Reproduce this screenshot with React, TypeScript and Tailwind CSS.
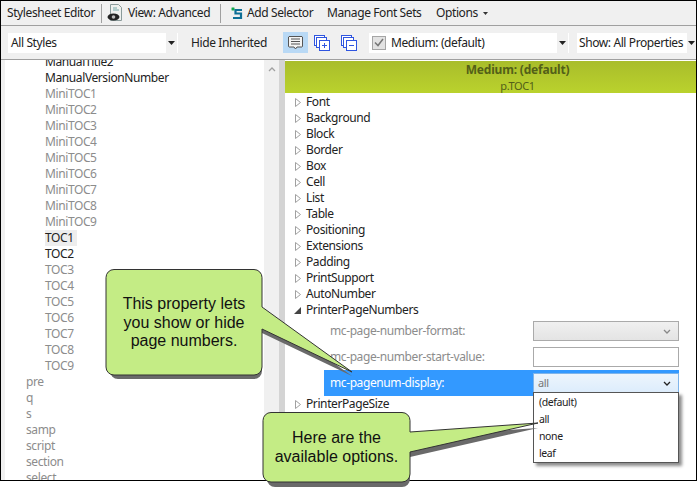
import React from "react";

const ui = "font-['Noto_Sans','Open_Sans',sans-serif]";

const before = ["ManualVersionNumber"];
const mini = ["MiniTOC1", "MiniTOC2", "MiniTOC3", "MiniTOC4", "MiniTOC5", "MiniTOC6", "MiniTOC7", "MiniTOC8", "MiniTOC9"];
const toc = ["TOC3", "TOC4", "TOC5", "TOC6", "TOC7", "TOC8", "TOC9"];
const tags = ["pre", "q", "s", "samp", "script", "section", "select"];
const groups = ["Font", "Background", "Block", "Border", "Box", "Cell", "List", "Table", "Positioning", "Extensions", "Padding", "PrintSupport", "AutoNumber"];

const Arrow = () => (
  <svg width="7" height="4" viewBox="0 0 7 4">
    <path d="M0 0h7L3.5 4z" fill="#222" />
  </svg>
);

const Open = () => (
  <svg width="6" height="9" viewBox="0 0 6 9" className="mr-[5px] shrink-0">
    <path d="M.5.5l5 4-5 4z" fill="#fff" stroke="#a0a0a0" />
  </svg>
);

const Chevron = ({ color = "#555" }: { color?: string }) => (
  <svg width="8" height="5" viewBox="0 0 8 5">
    <path d="M1 1l3 3 3-3" fill="none" stroke={color} strokeWidth="1.3" />
  </svg>
);

const Pages = ({ sign }: { sign: string }) => (
  <svg width="16" height="16" viewBox="0 0 16 16" fill="#fff" stroke="#2f55e0">
    <rect x="0.5" y="0.5" width="10" height="10" />
    <rect x="2.5" y="2.5" width="10" height="10" />
    <rect x="5.5" y="5.5" width="10" height="10" />
    <path d={sign === "+" ? "M8 10.500h5M10.500 8v5" : "M8 10.500h5"} />
  </svg>
);

const Style = ({ name, className = "text-[#8c8c8c]" }: { name: string; className?: string }) => (
  <div className={`h-4 leading-4 whitespace-nowrap ${className}`}>{name}</div>
);

const Group = ({ name }: { name: string }) => (
  <div className="flex h-4 items-center pl-[10px] text-[#222]">
    <Open />
    {name}
  </div>
);

export default function App() {
  return (
    <div className={`relative h-[497px] w-[697px] overflow-hidden bg-white text-[12px] tracking-[-0.4px] ${ui}`}>
      <div className="flex h-[481px] flex-col overflow-hidden border border-black bg-[#f0f0f0]">
        <div className="flex h-[25px] shrink-0 items-center border-b border-[#a0a0a0] whitespace-nowrap text-[#222]">
          <span className="ml-[6px] w-[88px]">Stylesheet Editor</span>
          <div className="ml-[6px] h-[19px] w-px bg-[#a0a0a0]" />
          <svg width="16" height="18" viewBox="0 0 16 18" className="ml-[5px]">
            <path d="M3.500.5h8l3 3v13h-11z" fill="#eef0ee" stroke="#8a9a9a" />
            <path d="M6 4h4M6 6h6" stroke="#7aa" />
            <ellipse cx="6.500" cy="13" rx="6" ry="3.500" fill="#222" />
            <circle cx="6.500" cy="13" r="1.800" fill="#bbb" />
          </svg>
          <span className="ml-[5px] w-[84px]">View: Advanced</span>
          <div className="ml-[8px] h-[19px] w-px bg-[#a0a0a0]" />
          <svg width="14" height="14" viewBox="0 0 14 14" className="ml-[8px]">
            <path d="M2.500 3h3M4 1.500v3" stroke="#12a84a" strokeWidth="2.500" />
            <path d="M13 4H6.500v3.500H12V12H4" fill="none" stroke="#0e6f96" strokeWidth="2.200" />
          </svg>
          <span className="ml-[4px] w-[68px]">Add Selector</span>
          <span className="ml-[12px] w-[96px]">Manage Font Sets</span>
          <span className="ml-[13px] w-[42px]">Options</span>
          <span className="ml-[5px] flex">
            <svg width="5" height="3" viewBox="0 0 5 3">
              <path d="M0 0h5L2.500 3z" fill="#333" />
            </svg>
          </span>
        </div>
        <div className="flex h-[34px] shrink-0 items-center border-b border-[#a0a0a0] whitespace-nowrap text-[#222]">
          <div className="ml-[7px] flex h-[20px] w-[170px] items-stretch bg-white">
            <span className="flex-1 pl-[3px] leading-[20px]">All Styles</span>
            <span className="mr-px flex w-[11px] items-center justify-center bg-[#f0f0f0]">
              <Arrow />
            </span>
          </div>
          <span className="ml-[13px] w-[76px]">Hide Inherited</span>
          <div className="ml-[16px] flex h-[21px] w-[25px] items-center justify-center bg-[#b9d9f5]">
            <svg width="15" height="14" viewBox="0 0 15 14">
              <path d="M1 .5h13l.5.5v9.500l-.500.500H9l-1.500 2L6 11H1l-.5-.500V1z" fill="#f4f4f4" stroke="#555" />
              <path d="M3 3h9M3 5.500h9M3 8h9" stroke="#555" />
            </svg>
          </div>
          <div className="ml-[6px] flex">
            <Pages sign="+" />
          </div>
          <div className="ml-[11px] flex">
            <Pages sign="-" />
          </div>
          <div className="ml-[12px] flex h-[20px] w-[200px] items-stretch bg-white">
            <span className="ml-[3px] flex w-[14px] items-center justify-center self-center">
              <span className="flex h-[14px] w-[14px] items-center justify-center border border-[#a5a5a5] bg-[#e2e2e2]">
                <svg width="10" height="9" viewBox="0 0 10 9">
                  <path d="M1 4.500l3 3L9 1" fill="none" stroke="#777" strokeWidth="1.500" />
                </svg>
              </span>
            </span>
            <span className="ml-[5px] flex-1 leading-[20px]">Medium: (default)</span>
            <span className="mr-px flex w-[11px] items-center justify-center bg-[#f0f0f0]">
              <Arrow />
            </span>
          </div>
          <div className="ml-[8px] flex h-[20px] flex-1 items-stretch bg-white">
            <span className="flex-1 pl-[2px] leading-[20px]">Show: All Properties</span>
            <span className="flex w-[9px] items-center justify-center bg-[#f0f0f0]">
              <Arrow />
            </span>
          </div>
        </div>
        <div className="flex min-h-0 flex-1">
          <div className="ml-[4px] w-[259px] overflow-hidden bg-white pt-[2px]">
            <div className="-mt-[8px] pl-[40px]">
              <Style name="ManualTitle2" className="text-[#222]" />
              {before.map((n) => (
                <Style key={n} name={n} className="text-[#222]" />
              ))}
              {mini.map((n) => (
                <Style key={n} name={n} />
              ))}
              <Style name="TOC1" className="w-[32px] bg-[#ededed] text-[#222]" />
              <Style name="TOC2" className="text-[#222]" />
              {toc.map((n) => (
                <Style key={n} name={n} />
              ))}
            </div>
            <div className="pl-[21px]">
              {tags.map((n) => (
                <Style key={n} name={n} />
              ))}
            </div>
          </div>
          <div className="flex w-[15px] justify-center bg-[#f0f0f0] pt-[7px]">
            <svg width="8" height="5" viewBox="0 0 8 5">
              <path d="M1 4l3-3 3 3" fill="none" stroke="#a0a0a0" strokeWidth="1.300" />
            </svg>
          </div>
          <div className="w-[6px] bg-[#d4d4d4]" />
          <div className="flex-1 bg-white pt-px">
            <div className="flex h-[32px] flex-col items-center bg-gradient-to-b from-[#a9bd2b] to-[#bad22d] pl-[54px] text-[#535f18]">
              <span className="font-bold leading-[18px] tracking-[-0.2px]">Medium: (default)</span>
              <span className="text-[11px] leading-[13px]">p.TOC1</span>
            </div>
            <div className="pt-[1px]">
              {groups.map((g) => (
                <Group key={g} name={g} />
              ))}
              <div className="flex h-4 items-center pl-[9px] text-[#222]">
                <svg width="7" height="7" viewBox="0 0 7 7" className="mr-[5px]">
                  <path d="M7 0v7H0z" fill="#444" />
                </svg>
                PrinterPageNumbers
              </div>
              <div className="flex h-[26px] items-center pl-[45px] pr-[17px] text-[#8c8c8c]">
                <span className="flex-1">mc-page-number-format:</span>
                <span className="flex h-[20px] w-[146px] items-center justify-end border border-[#aaa] bg-gradient-to-b from-[#f0f0f0] to-[#e4e4e4] pr-[7px]">
                  <Chevron color="#888" />
                </span>
              </div>
              <div className="flex h-[26px] items-center pl-[45px] pr-[17px] text-[#8c8c8c]">
                <span className="flex-1">mc-page-number-start-value:</span>
                <span className="h-[20px] w-[146px] border border-[#aaa] bg-white" />
              </div>
              <div className="ml-[39px] mr-[17px] flex h-[26px] items-center bg-[#3399ff] pl-[6px] text-white">
                <span className="flex-1">mc-pagenum-display:</span>
                <span className="flex h-[21px] w-[146px] items-center justify-between border border-[#7eb4ea] bg-gradient-to-b from-[#edf5fc] to-[#dcecfc] pl-[4px] pr-[7px] text-[11px] text-[#777]">
                  all
                  <Chevron color="#222" />
                </span>
              </div>
              <Group name="PrinterPageSize" />
            </div>
          </div>
        </div>
      </div>

      {/* option list opened from the display combo */}
      <div className="absolute left-[533px] top-[392px] flex h-[71px] w-[146px] flex-col justify-center border border-[#555] bg-white pl-[5px] text-[10.5px] tracking-[-0.4px] text-[#222] shadow-[3px_3px_3px_rgba(0,0,0,0.45)]">
        <div className="h-[17px] leading-[17px]">(default)</div>
        <div className="h-[17px] leading-[17px]">all</div>
        <div className="h-[17px] leading-[17px]">none</div>
        <div className="h-[17px] leading-[17px]">leaf</div>
      </div>

      {/* callouts */}
      <svg width="697" height="497" viewBox="0 0 697 497" className="absolute left-0 top-0">
        <g>
          <path
            d="M118 274.500h136a8 8 0 0 1 8 8V312l90 64-90-43v38a8 8 0 0 1-8 8H118a8 8 0 0 1-8-8V282.500a8 8 0 0 1 8-8z"
            fill="#6a6a6a"
          />
          <path
            d="M114 269.500h140a8 8 0 0 1 8 8V307l90 65-90-43v38a8 8 0 0 1-8 8H114a8 8 0 0 1-8-8V277.500a8 8 0 0 1 8-8z"
            fill="#c4ec85"
            stroke="#333"
          />
          <path
            d="M275 417.500h127a8 8 0 0 1 8 8V437l128-9-128 29v22a8 8 0 0 1-8 8H275a8 8 0 0 1-8-8V425.500a8 8 0 0 1 8-8z"
            fill="#6a6a6a"
          />
          <path
            d="M271 412.500h131a8 8 0 0 1 8 8V432l128-9-128 29v22a8 8 0 0 1-8 8H271a8 8 0 0 1-8-8V420.500a8 8 0 0 1 8-8z"
            fill="#c4ec85"
            stroke="#333"
          />
        </g>
      </svg>
      <div className="absolute left-[106px] top-[295px] w-[156px] text-center font-['Liberation_Sans',sans-serif] text-[16px] leading-[18.500px] tracking-normal text-[#111]">
        This property lets
        <br />
        you show or hide
        <br />
        page numbers.
      </div>
      <div className="absolute left-[263px] top-[429px] w-[147px] text-center font-['Liberation_Sans',sans-serif] text-[16px] leading-[18.500px] tracking-normal text-[#111]">
        Here are the
        <br />
        available options.
      </div>
    </div>
  );
}
